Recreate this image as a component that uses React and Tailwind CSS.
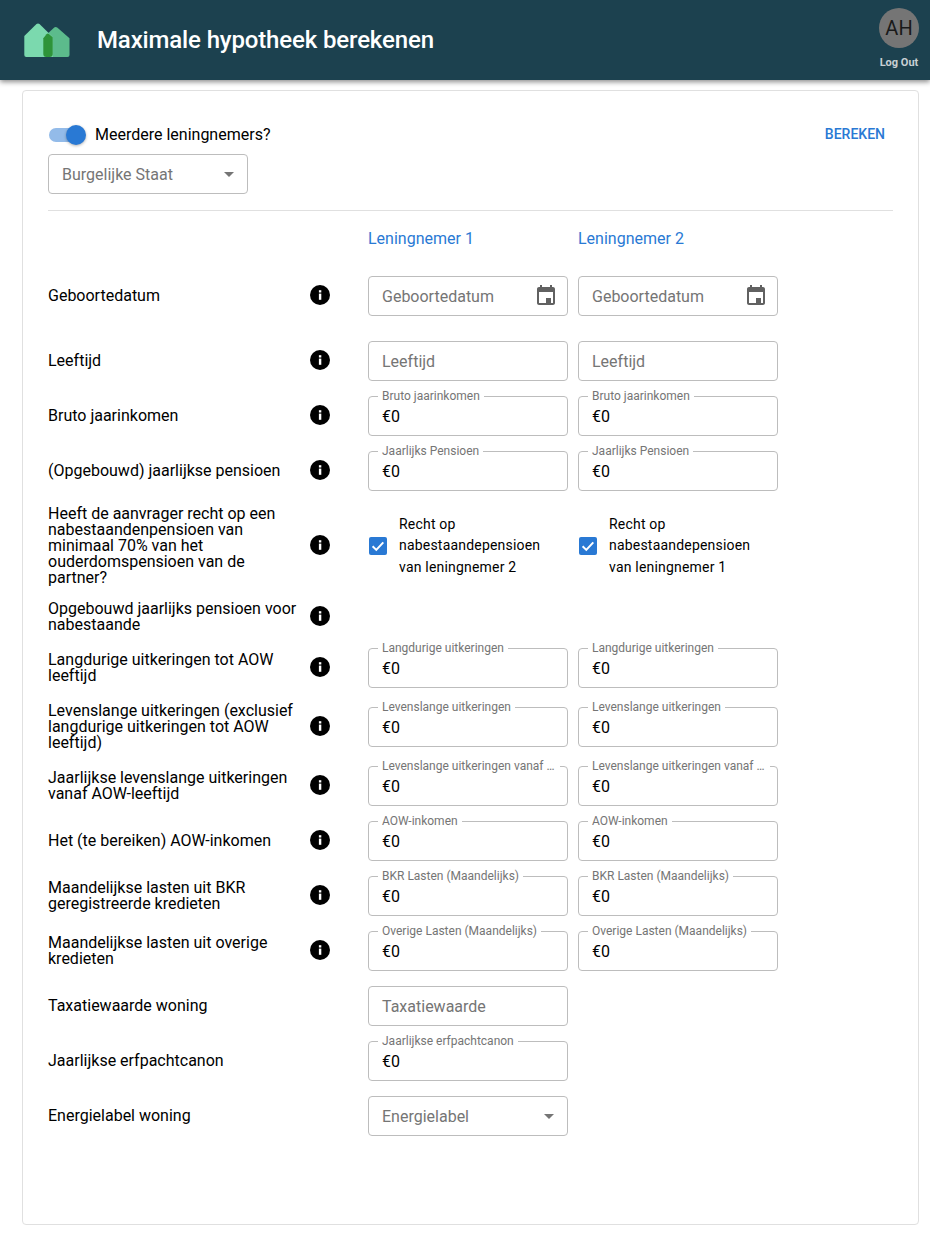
import React from "react";

const Info = () => (
  <svg viewBox="0 0 20 20" className="w-5 h-5 block mb-[2px]">
    <circle cx="10" cy="10" r="10" fill="#000" />
    <rect x="8.9" y="8.6" width="2.4" height="6.2" fill="#fff" />
    <rect x="8.9" y="5.2" width="2.4" height="2.3" fill="#fff" />
  </svg>
);

const Arrow = () => (
  <span className="w-0 h-0 border-x-[5px] border-x-transparent border-t-[5px] border-t-[#757575]" />
);

const Box = ({ children, legend, className = "" }) => (
  <div className={"relative w-[200px] h-10 rounded border border-[#bdbdbd] flex items-center pl-[13px] pr-[9px] text-base bg-white " + className}>
    {legend && (
      <span className="absolute left-[9px] -top-[8px] px-[4px] bg-white text-xs leading-[14px] text-[#757575] max-w-[182px] truncate">
        {legend}
      </span>
    )}
    {children}
  </div>
);

const Placeholder = ({ text }) => <span className="pt-[2px] text-[#757575]">{text}</span>;

const Money = ({ legend }) => (
  <Box legend={legend}>
    <span className="pt-[2px] text-black">€0</span>
  </Box>
);

const DateField = () => (
  <Box className="justify-between">
    <Placeholder text="Geboortedatum" />
    <svg viewBox="0 0 24 24" className="w-6 h-6 fill-[#616161]">
      <path d="M19 3h-1V1h-2v2H8V1H6v2H5c-1.1 0-2 .9-2 2v14c0 1.1.9 2 2 2h14c1.1 0 2-.9 2-2V5c0-1.100-.9-2-2-2zm0 16H5V8h14v11zm-7-5h5v5h-5z" />
    </svg>
  </Box>
);

const Check = ({ n }) => (
  <div className="w-[200px] flex items-center">
    <svg viewBox="0 0 18 18" className="w-[18px] h-[18px] ml-[1px] shrink-0">
      <rect width="18" height="18" rx="2" fill="#2979d4" />
      <path d="M3.6 9.300l3.700 3.600 7-7.500" fill="none" stroke="#fff" strokeWidth="2" />
    </svg>
    <span className="ml-3 w-[150px] text-sm leading-[21.5px] tracking-[0.2px] text-black">
      Recht op nabestaandepensioen van leningnemer {n}
    </span>
  </div>
);

const Row = ({ label, info = true, pt, h = "h-10", a, b }) => (
  <div className={"flex items-center " + pt + " " + h}>
    <div className="w-[256px] shrink-0 text-base leading-4 text-black">{label}</div>
    <div className="w-5 shrink-0 ml-[6px] flex justify-center">{info && <Info />}</div>
    <div className="ml-[38px] flex gap-[10px]">
      {a}
      {b}
    </div>
  </div>
);

const Logo = () => (
  <svg viewBox="23 22 48 36" className="w-12 h-9 block">
    <path d="M43 38 L54.200 27.500 Q55.700 26.400 57.200 27.500 L69.500 38.300 V55 Q69.500 57 67.500 57 H45 Z" fill="#5cbb8c" />
    <path d="M24.300 36 L36.500 24 Q38 22.900 39.500 24 L52.700 37 V57 H26.300 Q24.300 57 24.300 55 Z" fill="#7bd9ae" />
    <path d="M43.300 38.200 L46.500 34.300 Q47.800 33 49.200 34.200 L52.700 37.300 V54 Q52.700 57 49.700 57 H46.300 Q43.300 57 43.300 54 Z" fill="#2e9339" />
  </svg>
);

const M = (l) => ({ a: <Money legend={l} />, b: <Money legend={l} /> });

export default function App() {
  return (
    <div className="w-[930px] h-[1247px] bg-white overflow-hidden font-['Roboto',sans-serif] text-black">
      <header className="h-20 bg-[#1c414f] shadow-[0_2px_5px_rgba(0,0,0,0.45)] flex items-start justify-between relative">
        <div className="flex items-center h-20">
          <div className="ml-[23px]"><Logo /></div>
          <h1 className="ml-[26px] text-2xl font-medium text-white leading-8 tracking-[-0.14px]">Maximale hypotheek berekenen</h1>
        </div>
        <div className="w-10 mr-[11px] flex flex-col items-center mt-2">
          <div className="w-10 h-10 rounded-full bg-[#757575] flex items-center justify-center text-xl text-[#1a1a1a]">AH</div>
          <div className="mt-[9px] text-[11px] leading-3 font-bold text-[#c8d0d4] whitespace-nowrap">Log Out</div>
        </div>
      </header>

      <main className="mt-[10px] ml-[22px] w-[897px] h-[1135px] border border-[#e0e0e0] rounded px-[25px]">
        <div className="flex justify-between pt-[34px] pr-[8px]">
          <div>
            <div className="flex items-center h-5">
              <div className="relative w-9 h-[14px] ml-px rounded-full bg-[#93bbe9]">
                <span className="absolute right-[-1px] top-[-3px] w-5 h-5 rounded-full bg-[#2979d4] shadow-[0_1px_3px_rgba(0,0,0,0.3)]" />
              </div>
              <span className="ml-[10px] text-base">Meerdere leningnemers?</span>
            </div>
            <div className="mt-[9px]">
              <Box className="justify-between pr-[13px]">
                <Placeholder text="Burgelijke Staat" />
                <Arrow />
              </Box>
            </div>
          </div>
          <div className="text-sm font-medium text-[#2979d4] leading-4 pt-px">BEREKEN</div>
        </div>
        <div className="mt-4 border-t border-[#e0e0e0]" />

        <div className="flex pl-[320px] gap-[10px] pt-[18px] text-base leading-5 text-[#2979d4]">
          <div className="w-[200px]">Leningnemer 1</div>
          <div className="w-[200px]">Leningnemer 2</div>
        </div>

        <Row pt="mt-[27px]" label="Geboortedatum" a={<DateField />} b={<DateField />} />
        <Row pt="mt-[25px]" label="Leeftijd" a={<Box><Placeholder text="Leeftijd" /></Box>} b={<Box><Placeholder text="Leeftijd" /></Box>} />
        <Row pt="mt-[15px]" label="Bruto jaarinkomen" {...M("Bruto jaarinkomen")} />
        <Row pt="mt-[15px]" label="(Opgebouwd) jaarlijkse pensioen" {...M("Jaarlijks Pensioen")} />
        <Row pt="mt-[15px]" h="h-20" label="Heeft de aanvrager recht op een nabestaandenpensioen van minimaal 70% van het ouderdomspensioen van de partner?" a={<Check n={2} />} b={<Check n={1} />} />
        <Row pt="mt-[15px]" h="h-8" label="Opgebouwd jaarlijks pensioen voor nabestaande" />
        <Row pt="mt-[15px]" label="Langdurige uitkeringen tot AOW leeftijd" {...M("Langdurige uitkeringen")} />
        <Row pt="mt-[19px]" label="Levenslange uitkeringen (exclusief langdurige uitkeringen tot AOW leeftijd)" {...M("Levenslange uitkeringen")} />
        <Row pt="mt-[19px]" label="Jaarlijkse levenslange uitkeringen vanaf AOW-leeftijd" {...M("Levenslange uitkeringen vanaf AOW-leeftijd")} />
        <Row pt="mt-[15px]" label="Het (te bereiken) AOW-inkomen" {...M("AOW-inkomen")} />
        <Row pt="mt-[15px]" label="Maandelijkse lasten uit BKR geregistreerde kredieten" {...M("BKR Lasten (Maandelijks)")} />
        <Row pt="mt-[15px]" label="Maandelijkse lasten uit overige kredieten" {...M("Overige Lasten (Maandelijks)")} />
        <Row pt="mt-[15px]" info={false} label="Taxatiewaarde woning" a={<Box><Placeholder text="Taxatiewaarde" /></Box>} />
        <Row pt="mt-[15px]" info={false} label="Jaarlijkse erfpachtcanon" a={<Money legend="Jaarlijkse erfpachtcanon" />} />
        <Row pt="mt-[15px]" info={false} label="Energielabel woning" a={<Box className="justify-between pr-[13px]"><Placeholder text="Energielabel" /><Arrow /></Box>} />
      </main>
    </div>
  );
}
